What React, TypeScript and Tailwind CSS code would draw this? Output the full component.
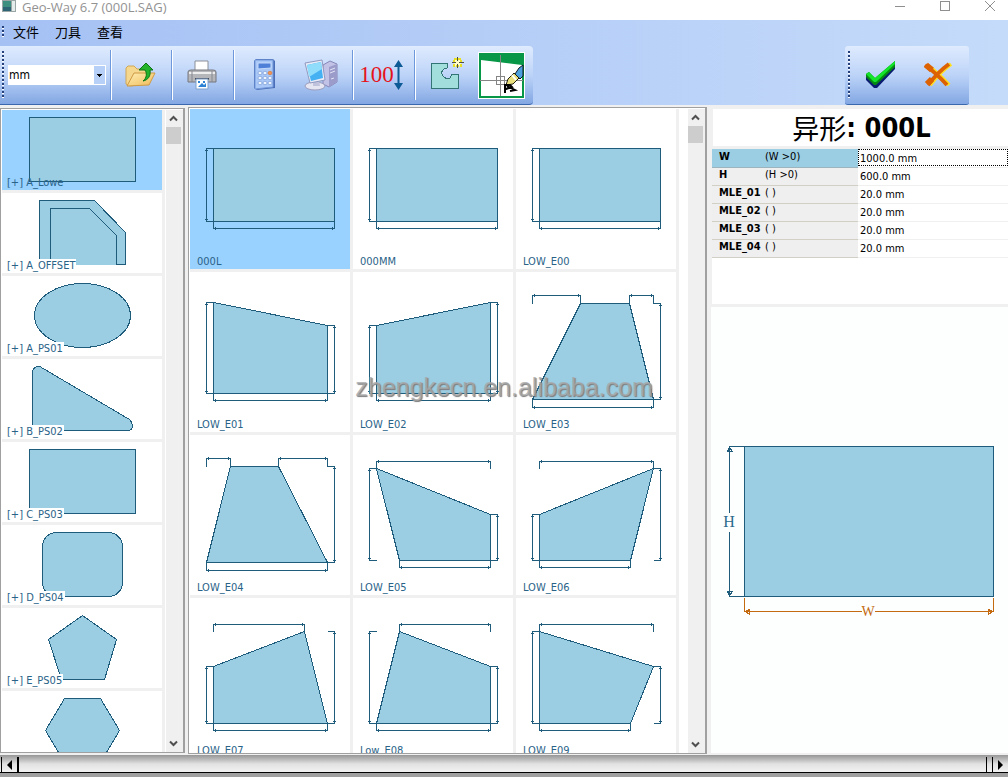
import React, { useState } from "react";

type Dim = {
  dir: "h" | "v";
  at: number; // position of the dimension line
  from: number;
  to: number;
  ext: [number, number]; // where the two extension lines end
};

type Shape = {
  name: string;
  points: string;
  dims: Dim[];
};

type Family = {
  name: string;
  drawing: React.ReactNode;
};

const h = (at: number, from: number, to: number, e1: number, e2 = e1): Dim => ({ dir: "h", at, from, to, ext: [e1, e2] });
const v = (at: number, from: number, to: number, e1: number, e2 = e1): Dim => ({ dir: "v", at, from, to, ext: [e1, e2] });

const rectangle = {
  points: "23,39 144,39 144,112 23,112",
  dims: [v(16, 39, 112, 23), h(119, 23, 144, 112)],
};

const shapes: Shape[] = [
  { name: "000L", ...rectangle },
  { name: "000MM", ...rectangle },
  { name: "LOW_E00", ...rectangle },
  {
    name: "LOW_E01",
    points: "23,30 137,53 137,121 23,121",
    dims: [v(16, 30, 121, 23), v(144, 53, 121, 137), h(128, 23, 137, 121)],
  },
  {
    name: "LOW_E02",
    points: "23,53 137,30 137,121 23,121",
    dims: [v(16, 53, 121, 23), v(144, 30, 121, 137), h(128, 23, 137, 121)],
  },
  {
    name: "LOW_E03",
    points: "64,31 113,31 137,127 16,127",
    dims: [h(23, 16, 64, 31), h(23, 113, 137, 31), v(144, 31, 127, 137), h(135, 16, 137, 127)],
  },
  {
    name: "LOW_E04",
    points: "40,31 88,31 137,127 16,127",
    dims: [h(23, 16, 40, 31), h(23, 88, 137, 31), v(144, 31, 127, 137), h(135, 16, 137, 127)],
  },
  {
    name: "LOW_E05",
    points: "23,33 137,79 137,125 46,125",
    dims: [h(26, 23, 137, 33), v(16, 33, 125, 23), v(144, 79, 125, 137), h(132, 46, 137, 125)],
  },
  {
    name: "LOW_E06",
    points: "137,33 23,79 23,125 114,125",
    dims: [h(26, 23, 137, 33), v(16, 79, 125, 23), v(144, 33, 125, 137), h(132, 23, 114, 125)],
  },
  {
    name: "LOW_E07",
    points: "23,68 114,33 137,125 23,125",
    dims: [h(26, 23, 114, 33), v(16, 68, 125, 23), v(144, 33, 125, 137), h(132, 23, 137, 125)],
  },
  {
    name: "Low_E08",
    points: "46,33 137,68 137,125 23,125",
    dims: [h(26, 46, 137, 33), v(16, 33, 125, 23), v(144, 68, 125, 137), h(132, 23, 137, 125)],
  },
  {
    name: "LOW_E09",
    points: "23,33 137,68 114,125 23,125",
    dims: [h(26, 23, 137, 33), v(16, 33, 125, 23), v(144, 68, 125, 137), h(132, 23, 114, 125)],
  },
];

const families: Family[] = [
  { name: "A_Lowe", drawing: <rect x="27" y="7" width="106" height="64" /> },
  {
    name: "A_OFFSET",
    drawing: (
      <>
        <path d="M37 7H92L123 39V71H37Z" />
        <path d="M48 71V15H87L114 42V71" />
      </>
    ),
  },
  { name: "A_PS01", drawing: <ellipse cx="80" cy="39" rx="48" ry="32" /> },
  { name: "B_PS02", drawing: <path d="M30 71V14Q30 7 36 7Q38 7 39 8L127 60Q130 63 130 66Q130 71 125 71Z" /> },
  { name: "C_PS03", drawing: <rect x="27" y="7" width="106" height="64" /> },
  { name: "D_PS04", drawing: <rect x="40" y="7" width="80" height="64" rx="14" /> },
  { name: "E_PS05", drawing: <path d="M80 7L114 31L102 71H59L46 31Z" /> },
  { name: "", drawing: <path d="M62 7H98L117 39L98 71H62L43 39Z" /> },
];

const params = [
  { name: "W", rule: "(W >0)", value: "1000.0 mm" },
  { name: "H", rule: "(H >0)", value: "600.0 mm" },
  { name: "MLE_01", rule: "( )", value: "20.0 mm" },
  { name: "MLE_02", rule: "( )", value: "20.0 mm" },
  { name: "MLE_03", rule: "( )", value: "20.0 mm" },
  { name: "MLE_04", rule: "( )", value: "20.0 mm" },
];

// dimension line with its extension lines and a small tick at each end
const dimPath = ({ dir, at, from, to, ext }: Dim) =>
  dir === "v"
    ? `M${ext[0]} ${from}H${at}V${to}H${ext[1]}M${at - 1.5} ${from + 2}h3M${at - 1.5} ${to - 2}h3`
    : `M${from} ${ext[0]}V${at}H${to}V${ext[1]}M${from + 2} ${at - 1.5}v3M${to - 2} ${at - 1.5}v3`;

function Separator() {
  return <div className="w-[2px] h-[50px] mt-1 shrink-0 border-l border-r border-l-[#6d98dc] border-r-white" />;
}

function Grip({ className }: { className: string }) {
  return (
    <div
      className={`w-[2px] shrink-0 bg-[repeating-linear-gradient(to_bottom,#26407c_0_2px,#ffffff_2px_3px,transparent_3px_4px)] ${className}`}
    />
  );
}

function ToolButton({ label, className, children }: { label: string; className: string; children: React.ReactNode }) {
  return (
    <button aria-label={label} className={`flex items-center justify-center shrink-0 ${className}`}>
      {children}
    </button>
  );
}

function FolderIcon() {
  return (
    <svg width="32" height="32" viewBox="0 0 32 32">
      <defs>
        <linearGradient id="fold" x1="0" y1="0" x2="1" y2="1">
          <stop offset="0" stopColor="#ffefb4" />
          <stop offset="1" stopColor="#efba58" />
        </linearGradient>
      </defs>
      <path d="M2 9l2-2h6l3 3h11v15l-18 2-4-2z" fill="#f5d88e" stroke="#d0a659" />
      <path d="M3 27L10 14h21l-6 12z" fill="url(#fold)" stroke="#cd9a45" />
      <path d="M19 22c4-3 4-8 2-11h-6l7-7 7 7h-3c1 6-2 10-7 11z" fill="#23b32a" stroke="#0d7515" />
    </svg>
  );
}

function PrinterIcon() {
  return (
    <svg width="32" height="32" viewBox="0 0 32 32">
      <path d="M9 13V2h13v11" fill="#ffffff" stroke="#8b8f98" />
      <path d="M2 13q0-2 3-2h22q3 0 3 2v10H2z" fill="#b4b6ba" stroke="#74777e" />
      <path d="M3 14h26" stroke="#eeeeef" strokeWidth="2" />
      <path d="M6 12v11M26 12v11" stroke="#85888f" />
      <path d="M9 20h14" stroke="#4a4d53" strokeWidth="2" />
      <path d="M10 20h12v10H10z" fill="#ffffff" stroke="#7da2ce" />
      <path d="M12 28l4-4 2 2 2-2v4z" fill="#2b82d4" />
      <path d="M12 23h2M17 23h2" stroke="#2b82d4" strokeWidth="2" />
    </svg>
  );
}

function CalculatorIcon() {
  return (
    <svg width="32" height="34" viewBox="0 0 32 34">
      <path d="M6 3l2-2h17l2 2v27l-18 2-3-2z" fill="#4a6fb8" />
      <path d="M7 2h18v27l-18 2z" fill="#a9c8f7" stroke="#7398da" />
      <path d="M10 5h13v5l-13 1z" fill="#4f80d8" stroke="#c5dafa" />
      {[14, 19, 24].map((y) =>
        [11, 16, 21].map((x) => (
          <ellipse
            key={`${x}-${y}`}
            cx={x + 1}
            cy={y + 1}
            rx="2"
            ry="1.7"
            fill={x === 21 && y === 14 ? "#f29552" : "#eef5ff"}
            stroke={x === 21 && y === 14 ? "#d37438" : "#6f92d2"}
            strokeWidth="0.6"
          />
        ))
      )}
    </svg>
  );
}

function ComputerIcon() {
  return (
    <svg width="34" height="34" viewBox="0 0 34 34">
      <path d="M19 7l7-4 7 3v18l-8 5-6-3z" fill="#c2c2e6" stroke="#8686b6" />
      <path d="M25 9l8-3v18l-8 5z" fill="#9c9ccb" />
      <path d="M26 12l5-2M26 15l5-2M27 21l3-1" stroke="#e4e4f7" />
      <ellipse cx="11" cy="28" rx="10" ry="4" fill="#e6e6f3" stroke="#9c9dbd" />
      <path d="M9 22h6l1 6H9z" fill="#c1c2dc" />
      <path d="M1 5l17-3 3 20-15 3z" fill="#e9ecf8" stroke="#9099bf" />
      <path d="M3 7l14-3 2 16-12 3z" fill="#45b0f2" />
      <path d="M3 7l14-3 1 7-13 8z" fill="#8fdcfb" />
    </svg>
  );
}

function PocketIcon() {
  return (
    <svg width="36" height="36" viewBox="0 0 36 36" shapeRendering="crispEdges">
      <path d="M3 8H19V13Q13 14 14 19Q17 25 22 23L24 19H30V33H3Z" fill="#a2dfdc" stroke="#337575" />
      <path d="M26 4h7v7h-7z" fill="#fffcc8" stroke="#e9df24" strokeWidth="2" strokeDasharray="3 1" />
      <path d="M29.500 2v4M29.500 9v4M24 7.500h4M31 7.500h5" stroke="#4c4f42" />
    </svg>
  );
}

function CadIcon() {
  return (
    <svg width="47" height="47" viewBox="0 0 47 47">
      <path d="M0 0h47v47H0z" fill="#ffffff" />
      <path d="M1 1h45v45H1z" fill="#079747" />
      <path d="M3 8l41 5v31H3z" fill="#ffffff" />
      <g shapeRendering="crispEdges" fill="none" stroke="#858585">
        <path d="M2 28.500H45M22.500 3V44" />
        <path d="M18.500 24.500h8v8h-8z" />
      </g>
      <path d="M41 16l4-3v11l-3 3-5-5z" fill="#4a9fdc" stroke="#101820" />
      <path d="M36 21l5 5-6 6-7 1 2-6z" fill="#e9df7c" stroke="#1c1c10" />
      <path d="M34 23l4 5" stroke="#fff" strokeWidth="2" />
      <path d="M27 41v-8h5l2 2-6 2M29 34l8 4-5 1" fill="none" stroke="#000000" strokeWidth="2" />
    </svg>
  );
}

function CheckIcon() {
  return (
    <svg width="32" height="30" viewBox="0 0 32 30">
      <path d="M1 17l4-3 5 6L30 3v6L12 28H9L1 20z" fill="#0a1c70" />
      <path d="M1 14l3-2 6 6L30 1v6L11 25H9L1 17z" fill="#078a12" />
      <path d="M1 14l3-2 6 6L30 1v3L11 22H9z" fill="#12e52a" />
    </svg>
  );
}

function CancelIcon() {
  return (
    <svg width="32" height="28" viewBox="0 0 32 28">
      <g fill="none" strokeLinejoin="round">
        <path d="M5 4q11 8 22 20M29 3Q18 11 8 24" stroke="#ffdf22" strokeWidth="4" />
        <path d="M3 4q11 8 22 20M27 3Q16 11 6 24" stroke="#dd6204" strokeWidth="4" />
        <path d="M4 4l6 5M5 23l5-5" stroke="#dd6204" strokeWidth="6" />
      </g>
    </svg>
  );
}

function ScrollBar() {
  return (
    <div className="w-[15px] shrink-0 flex flex-col bg-[#f0f0f0]">
      <button aria-label="Scroll up" className="h-[17px] flex items-center justify-center">
        <svg width="9" height="7" viewBox="0 0 9 7">
          <path d="M1 5.500L4.500 2L8 5.500" fill="none" stroke="#505050" strokeWidth="2" />
        </svg>
      </button>
      <div className="h-[17px] bg-[#cdcdcd]" />
      <div className="flex-1" />
      <button aria-label="Scroll down" className="h-[17px] flex items-center justify-center">
        <svg width="9" height="7" viewBox="0 0 9 7">
          <path d="M1 1.500L4.500 5L8 1.500" fill="none" stroke="#505050" strokeWidth="2" />
        </svg>
      </button>
    </div>
  );
}

function TitleBar() {
  return (
    <header className="h-5 shrink-0 flex items-start bg-white pl-[2px] overflow-hidden">
      <svg width="14" height="13" viewBox="0 0 14 13" shapeRendering="crispEdges">
        <path d="M0 0h14v12H0z" fill="#9aa5a5" />
        <path d="M1 1h8v10H1z" fill="#3d8f80" />
        <path d="M1 7h8v4H1z" fill="#2d6574" />
        <path d="M10 1h3v10h-3z" fill="#e4ebeb" />
      </svg>
      <h1 className="ml-[6px] text-[13px] leading-[14px] whitespace-nowrap text-[#929292] font-['Open_Sans',sans-serif]">
        Geo-Way 6.7 (000L.SAG)
      </h1>
      <div className="ml-auto -mr-1 flex">
        <button aria-label="Minimize" className="w-[45px] h-3 flex items-center justify-center">
          <svg width="10" height="10" viewBox="0 0 10 10" shapeRendering="crispEdges">
            <path d="M0 5.500h10" stroke="#8f8f8f" />
          </svg>
        </button>
        <button aria-label="Maximize" className="w-[45px] h-3 flex items-center justify-center">
          <svg width="10" height="10" viewBox="0 0 10 10" shapeRendering="crispEdges">
            <path d="M.5 .5h9v9h-9z" fill="none" stroke="#8f8f8f" />
          </svg>
        </button>
        <button aria-label="Close" className="w-[45px] h-3 flex items-center justify-center">
          <svg width="10" height="10" viewBox="0 0 10 10">
            <path d="M0 0l10 10M10 0L0 10" stroke="#8f8f8f" />
          </svg>
        </button>
      </div>
    </header>
  );
}

function ToolBars() {
  const bar = "flex h-[59px] bg-linear-to-b from-[#dfebfe] via-[#bdd4f8] to-[#83a7e3] border-b border-[#3b67ae]";

  return (
    <div className="shrink-0 bg-linear-to-r from-[#a5c1f4] to-[#c5dbfa]">
      <nav className="h-[26px] flex items-center pl-[2px] pb-[2px]">
        <Grip className="h-3" />
        <div className="flex gap-4 pl-[9px] text-[13px] leading-[18px] text-black font-['Noto_Sans_CJK_SC',sans-serif]">
          <button>文件</button>
          <button>刀具</button>
          <button>查看</button>
        </div>
      </nav>
      <div className="flex justify-between">
        <div className={`${bar} rounded-r-[4px] w-[533px]`}>
          <Grip className="h-12 mt-[5px] ml-[2px]" />
          <div className="relative ml-1 mr-[4px] mt-[19px] w-[98px] h-5 shrink-0">
            <select
              aria-label="Unit"
              defaultValue="mm"
              className="appearance-none w-full h-full bg-white pl-px text-[12px] leading-[16px] text-black"
            >
              <option>mm</option>
              <option>inch</option>
            </select>
            <span className="absolute right-px top-px h-[18px] w-[11px] bg-[#b6d0f7] flex items-center justify-center pointer-events-none">
              <svg width="5" height="3" viewBox="0 0 5 3" shapeRendering="crispEdges">
                <path d="M0 0h5L2.500 3z" />
              </svg>
            </span>
          </div>
          <Separator />
          <ToolButton label="Open" className="w-[59px] pr-1">
            <FolderIcon />
          </ToolButton>
          <Separator />
          <ToolButton label="Print" className="w-[60px] pr-[2px]">
            <PrinterIcon />
          </ToolButton>
          <Separator />
          <ToolButton label="Calculator" className="w-[58px]">
            <CalculatorIcon />
          </ToolButton>
          <ToolButton label="Computer" className="w-[59px] pr-1">
            <ComputerIcon />
          </ToolButton>
          <Separator />
          <ToolButton label="Dimensions" className="w-[60px] pr-[6px]">
            <span className="text-[23px] leading-[28px] text-[#e5141c] font-['Liberation_Serif',serif]">100</span>
            <svg width="9" height="30" viewBox="0 0 9 30">
              <path d="M4.500 4v22" stroke="#0c5a96" strokeWidth="2" />
              <path d="M4.500 0L9 7H0zM4.500 30L9 23H0z" fill="#0c5a96" />
            </svg>
          </ToolButton>
          <Separator />
          <ToolButton label="New shape" className="w-[60px] pb-1">
            <PocketIcon />
          </ToolButton>
          <ToolButton label="Draw" className="w-[51px]">
            <CadIcon />
          </ToolButton>
        </div>
        <div className={`${bar} rounded-[3px] w-[124px] mr-[39px]`}>
          <Grip className="h-12 mt-[5px] ml-[3px]" />
          <ToolButton label="Confirm" className="w-[57px] ml-[2px]">
            <CheckIcon />
          </ToolButton>
          <ToolButton label="Cancel" className="w-[57px]">
            <CancelIcon />
          </ToolButton>
        </div>
      </div>
    </div>
  );
}

function Preview() {
  return (
    <svg className="w-full h-full" viewBox="0 0 297 446" shapeRendering="crispEdges" fill="none">
      <g transform="translate(.5 .5)">
        <rect x="33" y="139" width="249" height="150" fill="#9bcde3" stroke="#1f5c7c" />
        <path d="M33 139H18V205M18 224V289H33M18 140l-2 4h5zM18 288l-2-4h5z" stroke="#1f5c7c" />
        <path d="M33 290V304H150M163 304H282V290M34 304l4-2v5zM281 304l-4-2v5z" stroke="#c46a10" />
      </g>
      <g fontFamily="Liberation Serif, serif" textAnchor="middle">
        <text x="18" y="220" fontSize="16" fill="#2b6a8c">H</text>
        <text x="157" y="309" fontSize="14" fill="#c46a10">W</text>
      </g>
    </svg>
  );
}

function App() {
  const [family, setFamily] = useState(0);
  const [shape, setShape] = useState(0);

  return (
    <div className="relative h-screen flex flex-col overflow-hidden bg-[#f0f0f0] text-[11px] leading-[14px] font-['DejaVu_Sans_Condensed','DejaVu_Sans',sans-serif]">
      <TitleBar />
      <ToolBars />

      <main className="flex-1 min-h-0 flex">
        {/* shape families */}
        <section className="w-[185px] shrink-0 mt-[3px] mb-[2px] flex bg-white border-l border-t border-[#a0a0a0] border-r-2 border-b pl-px pt-px">
          <div className="w-[163px] h-full overflow-hidden bg-[#f0f0f0] flex flex-col gap-[3px]">
            {families.map((item, i) => (
              <button
                key={i}
                aria-label={item.name || "F_PS06"}
                onClick={() => setFamily(i)}
                className={`relative block w-40 h-20 shrink-0 ${i === family ? "bg-[#99d1ff]" : "bg-white"}`}
              >
                <svg width="160" height="80" viewBox="0 0 160 80" shapeRendering="crispEdges">
                  <g transform="translate(.5 .5)" fill="#9bcde3" stroke="#1f5c7c">
                    {item.drawing}
                  </g>
                </svg>
                {item.name && (
                  <span
                    className={`absolute left-[5px] bottom-0 pr-px text-[#2a6388] ${i === family ? "" : "bg-white"}`}
                  >
                    [+] {item.name}
                  </span>
                )}
              </button>
            ))}
          </div>
          <div className="w-px" />
          <ScrollBar />
          <div className="flex-1 bg-[#f0f0f0]" />
        </section>

        {/* shapes of the chosen family */}
        <section className="w-[519px] ml-[3px] shrink-0 mt-[2px] mb-px flex bg-white border-l border-t border-[#a0a0a0] border-r-2 border-b pl-px pt-px">
          <div className="w-[489px] h-full overflow-hidden bg-[#f0f0f0] grid grid-cols-3 gap-[3px] content-start pr-[3px]">
            {shapes.map((item, i) => (
              <button
                key={item.name}
                onClick={() => setShape(i)}
                className={`relative block w-40 h-40 ${i === shape ? "bg-[#99d1ff]" : "bg-white"}`}
              >
                <svg width="160" height="160" viewBox="0 0 160 160" shapeRendering="crispEdges">
                  <g transform="translate(.5 .5)" stroke="#1f5c7c">
                    <polygon points={item.points} fill="#9bcde3" />
                    {item.dims.map((dim, n) => (
                      <path key={n} d={dimPath(dim)} fill="none" />
                    ))}
                  </g>
                </svg>
                <span className="absolute left-[7px] bottom-0 text-[#2a6388]">{item.name}</span>
              </button>
            ))}
          </div>
          <div className="w-[9px]" />
          <ScrollBar />
          <div className="flex-1 bg-[#f0f0f0]" />
        </section>

        {/* parameters and preview */}
        <section className="flex-1 min-w-0 ml-1 flex flex-col">
          <h2 className="h-[37px] mt-1 ml-[2px] pl-[2px] bg-white flex items-center justify-center text-[27px] leading-[36px] font-bold text-black">
            <span className="font-normal font-['Noto_Sans_CJK_SC',sans-serif]">异形</span>
            <span className="whitespace-pre">: 000L</span>
          </h2>
          <div className="mt-[3px] ml-px h-[155px] bg-white">
            <table className="w-full table-fixed border-collapse">
              <tbody>
                {params.map((item, i) => (
                  <tr key={item.name} className="h-[18px]">
                    <th
                      className={`w-[146px] h-[18px] p-0 text-left font-normal border-b ${
                        i === 0 ? "bg-[#9bcde3] border-[#9bb4bd]" : "bg-[#efefef] border-[#d2d0c4]"
                      }`}
                    >
                      <label htmlFor={item.name} className="flex pl-[7px] pb-[2px] text-black">
                        <span className="w-[46px] font-bold">{item.name}</span>
                        {item.rule}
                      </label>
                    </th>
                    <td className="h-[18px] p-0 border-b border-[#f0f0f0]">
                      <input
                        id={item.name}
                        defaultValue={item.value}
                        className={`block w-full h-[17px] px-px pt-px bg-white text-black outline-none border ${
                          i === 0 ? "border-dotted border-black" : "border-transparent"
                        }`}
                      />
                    </td>
                  </tr>
                ))}
              </tbody>
            </table>
          </div>
          <div className="mt-[3px] mb-[2px] flex-1 min-h-0 bg-[#fcfffe]">
            <Preview />
          </div>
        </section>
      </main>

      <footer className="h-[22px] shrink-0 border-b-4 border-[#a0a0a0] bg-linear-to-b from-[#969696] via-[#e2e2e2] to-[#f4f4f4] pt-[2px]">
        <div className="h-4 flex justify-between border-b border-black pl-px">
          <button aria-label="Scroll left" className="w-[18px] border-l border-r-2 border-black flex items-center justify-center">
            <svg width="5" height="10" viewBox="0 0 5 10">
              <path d="M5 0v10L0 5z" />
            </svg>
          </button>
          <div className="flex">
            <div className="w-[7px] border-x border-black" />
            <button aria-label="Scroll right" className="w-[15px] flex items-center justify-center">
              <svg width="5" height="10" viewBox="0 0 5 10">
                <path d="M0 0v10l5-5z" />
              </svg>
            </button>
          </div>
        </div>
      </footer>

      <div className="absolute inset-0 pb-1 flex items-center justify-center pointer-events-none">
        <span className="text-[25px] leading-[32px] text-[#a8a8a8]/80 font-['Liberation_Sans',sans-serif] [text-shadow:1px_1px_1px_#7c7c7c]">
          zhengkecn.en.alibaba.com
        </span>
      </div>
    </div>
  );
}

export default App;
